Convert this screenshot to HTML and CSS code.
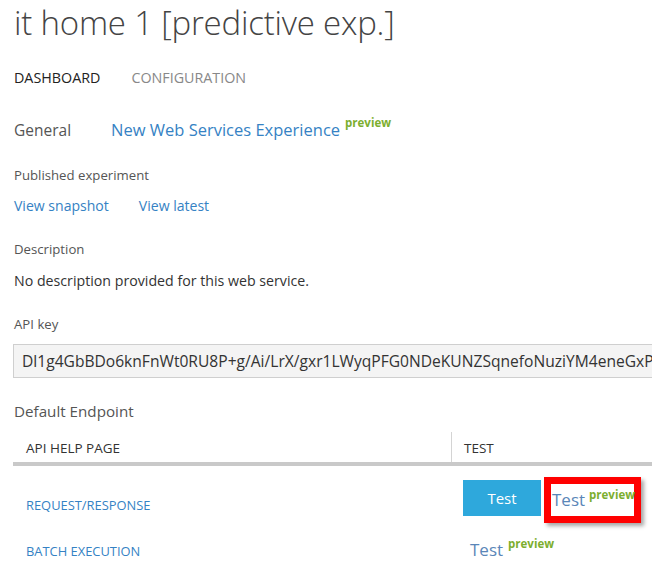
FILE: index.html
```html
<!DOCTYPE html>
<html>
<head>
<meta charset="utf-8">
<link rel="stylesheet" href="styles.css">
</head>
<body>
<div class="page">
  <h1 class="title">it home 1 [predictive exp.]</h1>
  <nav class="tabs">
    <span class="tab active">DASHBOARD</span>
    <span class="tab">CONFIGURATION</span>
  </nav>
  <div class="general">
    <span class="label-lg">General</span>
    <a class="link-lg">New Web Services Experience</a><sup class="preview">preview</sup>
  </div>
  <div class="label">Published experiment</div>
  <div class="links">
    <a class="link">View snapshot</a>
    <a class="link">View latest</a>
  </div>
  <div class="label">Description</div>
  <div class="text">No description provided for this web service.</div>
  <div class="label">API key</div>
  <div class="apikey">Dl1g4GbBDo6knFnWt0RU8P+g/Ai/LrX/gxr1LWyqPFG0NDeKUNZSqnefoNuziYM4eneGxP</div>
  <div class="endpoint">Default Endpoint</div>
  <div class="table">
    <div class="thead">
      <div class="th c1">API HELP PAGE</div>
      <div class="th c2">TEST</div>
    </div>
    <div class="row r1">
      <div class="c1"><a class="caps">REQUEST/RESPONSE</a></div>
      <div class="c2 tests">
        <span class="btn">Test</span>
        <span class="hl"><a class="testlink">Test</a><sup class="preview">preview</sup></span>
      </div>
    </div>
    <div class="row r2">
      <div class="c1"><a class="caps">BATCH EXECUTION</a></div>
      <div class="c2 tests2">
        <a class="testlink">Test</a><sup class="preview">preview</sup>
      </div>
    </div>
  </div>
</div>
</body>
</html>
```

FILE: styles.css
```css
html, body {
  margin: 0;
  padding: 0;
  background: #fff;
  overflow: hidden;
}
body {
  font-family: "Open Sans", "Noto Sans", "Liberation Sans", sans-serif;
  color: #333;
}
.page {
  padding-left: 14px;
  width: 638px;
}
.title {
  margin: 0;
  font-size: 33px;
  font-weight: 300;
  color: #444;
  line-height: 46px;
  letter-spacing: -0.2px;
}
.tabs {
  display: flex;
  gap: 31px;
  margin-top: 23px;
  font-size: 14.3px;
  line-height: 18px;
  color: #888;
}
.tab.active { color: #222; }
.general {
  margin-top: 31px;
  line-height: 24px;
  display: flex;
  align-items: flex-start;
}
.label-lg {
  font-size: 15.5px;
  color: #555;
  width: 97px;
}
.link-lg {
  font-size: 16.5px;
  color: #3582c4;
}
.preview {
  font-size: 11.5px;
  font-weight: 700;
  color: #7cae2e;
  margin-left: 5px;
  line-height: 14px;
  vertical-align: top;
  position: relative;
  top: -2px;
}
.label {
  font-size: 13.2px;
  color: #555;
  line-height: 20px;
}
.general + .label { margin-top: 23px; }
.links {
  display: flex;
  gap: 30px;
  margin-top: 10px;
  line-height: 22px;
}
.link {
  font-size: 14.05px;
  color: #3582c4;
}
.links + .label { margin-top: 22px; }
.text {
  margin-top: 11px;
  font-size: 14.2px;
  line-height: 22px;
  color: #333;
}
.text + .label { margin-top: 22px; }
.apikey {
  margin-top: 10px;
  margin-left: -1px;
  height: 34px;
  box-sizing: border-box;
  border: 1px solid #cfcfcf;
  border-right: none;
  background: #f4f4f4;
  font-size: 15.6px;
  line-height: 32px;
  padding-left: 8px;
  white-space: nowrap;
  overflow: hidden;
  color: #333;
}
.endpoint {
  margin-top: 22px;
  font-size: 15.2px;
  color: #555;
  line-height: 22px;
}
.table {
  margin-top: 10px;
  margin-left: -1px;
}
.thead {
  display: flex;
  border-bottom: 4px solid #c9c9c9;
  height: 30px;
}
.th {
  font-size: 13.5px;
  color: #333;
  line-height: 30px;
  padding-top: 1px;
}
.c1 {
  box-sizing: border-box;
  width: 438px;
  padding-left: 13px;
}
.thead .c2 {
  border-left: 1px solid #d4d4d4;
  padding-left: 12px;
  height: 29px;
}
.row {
  display: flex;
  align-items: center;
}
.r1 { height: 68px; }
.r2 { height: 32px; }
.caps {
  font-size: 12.9px;
  color: #3582c4;
}
.r1 .c1 { padding-top: 8px; }
.tests {
  display: flex;
  align-items: flex-start;
  padding-left: 12px;
  gap: 3px;
}
.btn {
  display: inline-block;
  margin-top: 3px;
  width: 78px;
  height: 36px;
  line-height: 36px;
  text-align: center;
  background: #2ea8dc;
  color: #fff;
  font-size: 15px;
}
.hl {
  display: flex;
  align-items: flex-start;
  box-sizing: border-box;
  width: 97px;
  height: 46px;
  border: 7px solid #f00;
  box-shadow: 3px 3px 4px rgba(0,0,0,0.35);
  padding-left: 1px;
  padding-top: 4px;
}
.testlink {
  font-size: 17px;
  color: #5a86b8;
  line-height: 24px;
}
.hl .preview { top: 0; margin-left: 4px; }
.tests2 {
  padding-left: 19px;
  display: flex;
  align-items: flex-start;
}
.tests2 .preview { top: -1px; }
```
